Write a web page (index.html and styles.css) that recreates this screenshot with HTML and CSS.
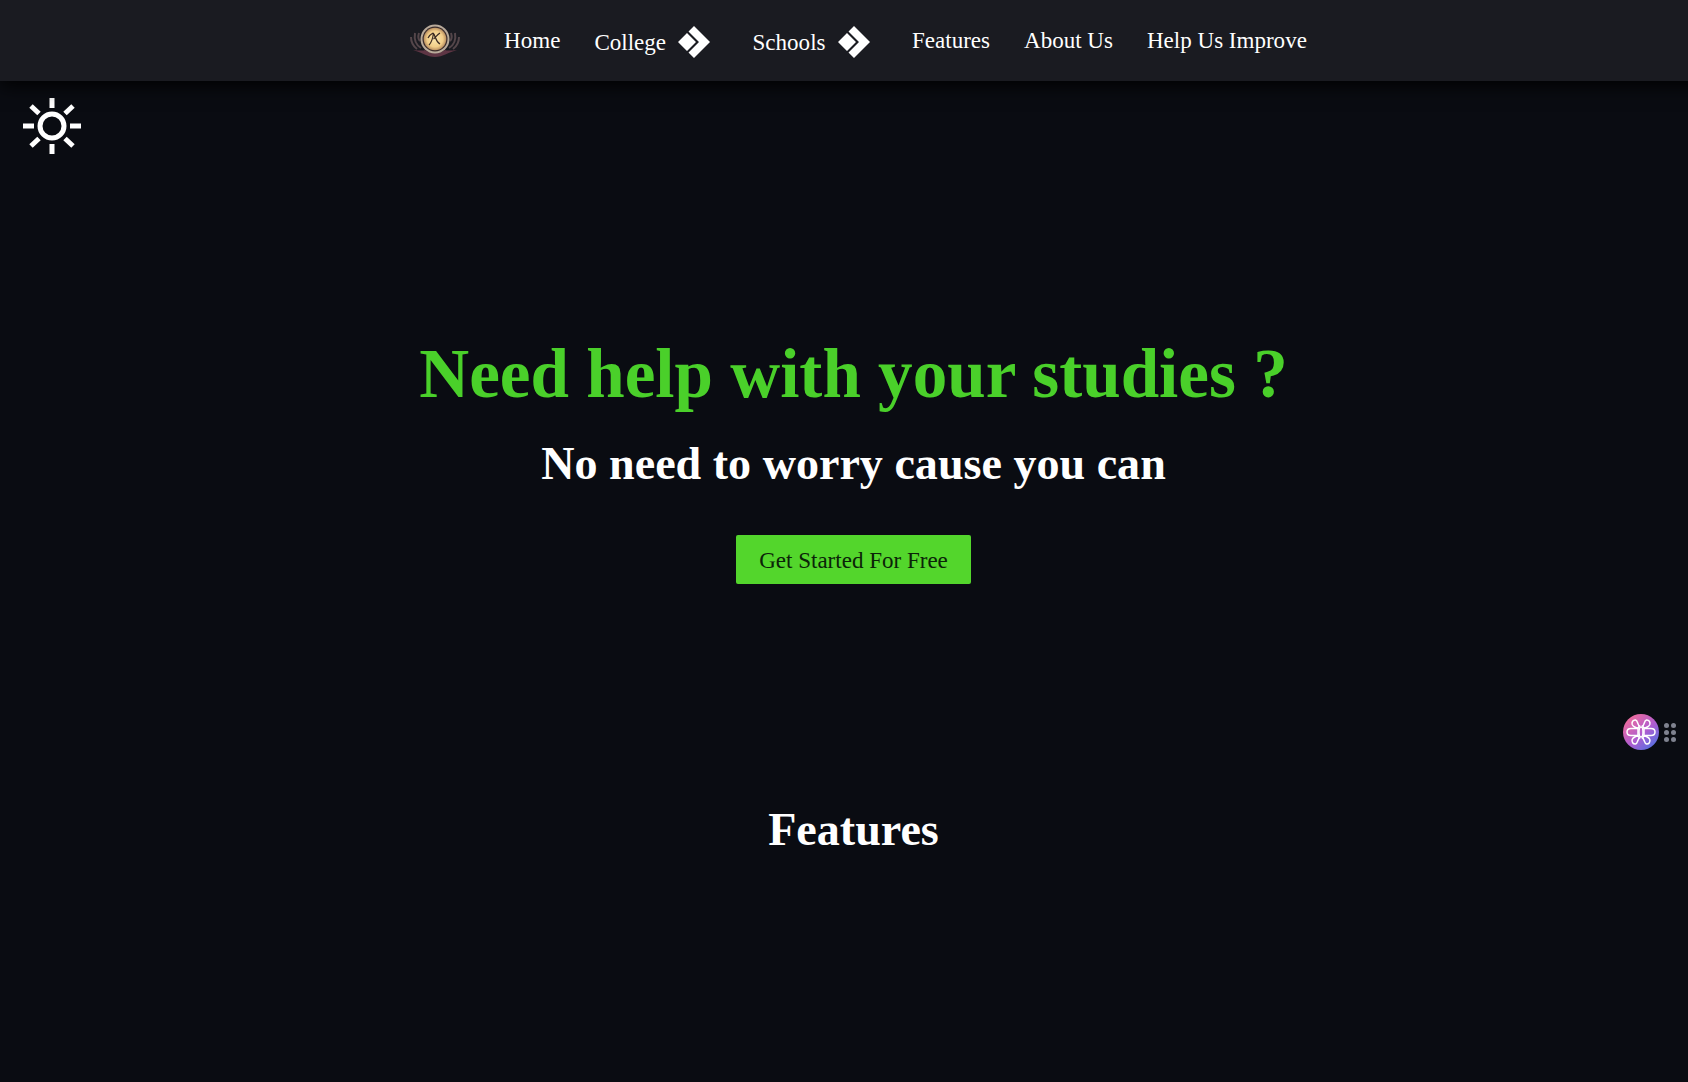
FILE: index.html
```html
<!DOCTYPE html>
<html lang="en">
<head>
<meta charset="utf-8">
<title>Need help with your studies?</title>
<link rel="stylesheet" href="styles.css">
</head>
<body>
<div class="page">
<header class="navbar">
  <nav class="nav-inner">
    <a class="logo" href="#" aria-label="Home">
      <svg viewBox="0 0 52 36" width="52" height="36">
        <defs>
          <radialGradient id="lg" cx="50%" cy="50%" r="50%">
            <stop offset="0" stop-color="#fbe6ae"/>
            <stop offset="0.7" stop-color="#f1cd88"/>
            <stop offset="1" stop-color="#b98f60"/>
          </radialGradient>
        </defs>
        <g fill="none" stroke="#54464a" stroke-width="2">
          <path d="M12 25C7 22 5 16 6 10M8 26C4 23 2 19 2 14M11 18C9 16 9 13 10 10"/>
          <path d="M40 25C45 22 47 16 46 10M44 26C48 23 50 19 50 14M41 18C43 16 43 13 42 10"/>
        </g>
        <path d="M4 27C12 29 18 34 26 34S40 29 48 27C42 27.500 38 28 36 27C33 29 30 30 26 30S19 29 16 27C14 28 10 27.500 4 27Z" fill="#5e3544"/>
        <circle cx="26" cy="16" r="14.500" fill="#b9ab9b"/>
        <circle cx="26" cy="16" r="12.500" fill="#3a2c2a"/>
        <circle cx="26" cy="16" r="11.300" fill="url(#lg)"/>
        <path d="M20 22C22 20 24 14 24.500 10M24 10C27 13 26 18 31 21M31 10C28 12 26 15 24.500 16M19 15C20 13 22 11 24 10" fill="none" stroke="#3a2a22" stroke-width="1.2"/>
      </svg>
    </a>
    <a class="nav-link" href="#">Home</a>
    <a class="nav-link nav-drop" href="#">College
      <svg class="drop-icon" viewBox="0 0 32 32" width="32" height="32"><path d="M16 0L32 16L16 32L10.500 26.500L21 16L10.500 5.500ZM9 7L18 16L9 25L0 16Z" fill="#fff"/></svg>
    </a>
    <a class="nav-link nav-drop" href="#">Schools
      <svg class="drop-icon" viewBox="0 0 32 32" width="32" height="32"><path d="M16 0L32 16L16 32L10.500 26.500L21 16L10.500 5.500ZM9 7L18 16L9 25L0 16Z" fill="#fff"/></svg>
    </a>
    <a class="nav-link" href="#">Features</a>
    <a class="nav-link" href="#">About Us</a>
    <a class="nav-link" href="#">Help Us Improve</a>
  </nav>
</header>

<div class="theme-row">
  <button class="theme-toggle" aria-label="Toggle theme">
    <svg viewBox="0 0 58 58" width="58" height="58" fill="none" stroke="#fff">
      <circle cx="29" cy="29" r="12" stroke-width="5"/>
      <g stroke-width="5">
        <path d="M29 1V11M29 47V57M0 29H11M47 29H58"/>
        <path d="M8 9L16 16.500M42 41.500L50 49M50 9L42 16.500M16 41.500L8 49"/>
      </g>
    </svg>
  </button>
</div>

<main>
  <section class="hero">
    <h1 class="hero-title">Need help with your studies ?</h1>
    <h2 class="hero-sub">No need to worry cause you can</h2>
    <a class="cta" href="#">Get Started For Free</a>
  </section>
  <section class="features">
    <h2 class="features-title">Features</h2>
  </section>
</main>
</div>

<aside class="widget">
  <span class="widget-badge">
    <svg viewBox="0 0 36 36" width="36" height="36">
      <defs>
        <linearGradient id="wg" x1="0.15" y1="0.1" x2="0.85" y2="0.9">
          <stop offset="0" stop-color="#ee6c9c"/>
          <stop offset="0.55" stop-color="#b05cd0"/>
          <stop offset="1" stop-color="#5a6fe0"/>
        </linearGradient>
      </defs>
      <circle cx="18" cy="18" r="18" fill="url(#wg)"/>
      <g fill="none" stroke="#fff" stroke-width="1.5">
        <ellipse cx="18" cy="18" rx="2" ry="5"/>
        <path d="M16.500 12C14.500 11 15 6.500 12.500 6C10 5.800 8.500 8 9.200 10.500C10 12.500 13 14 15 14Z"/>
        <path d="M19.500 12C21.500 11 21 6.500 23.500 6C26 5.800 27.500 8 26.800 10.500C26 12.500 23 14 21 14Z"/>
        <path d="M16.500 24C14.500 25 15 29.500 12.500 30C10 30.200 8.500 28 9.200 25.500C10 23.500 13 22 15 22Z"/>
        <path d="M19.500 24C21.500 25 21 29.500 23.500 30C26 30.200 27.500 28 26.800 25.500C26 23.500 23 22 21 22Z"/>
        <path d="M15 14.500H8C5.500 14.500 4 16 4 18S5.500 21.500 8 21.500H15Z"/>
        <path d="M21 14.500H28C30.500 14.500 32 16 32 18S30.500 21.500 28 21.500H21Z"/>
      </g>
    </svg>
  </span>
  <span class="grip">
    <i></i><i></i><i></i><i></i><i></i><i></i>
  </span>
</aside>
</body>
</html>
```
FILE: styles.css
```css
* { box-sizing: border-box; }
html, body { margin: 0; height: 100%; }
body {
  background: #0a0c12;
  color: #fff;
  font-family: "Liberation Serif", "Times New Roman", serif;
  overflow: hidden;
}
a { color: inherit; text-decoration: none; }

.page { width: 1707px; }

.navbar {
  height: 81px;
  background: #1a1b21;
  box-shadow: 0 4px 18px #000;
  position: relative;
}
.nav-inner {
  height: 100%;
  display: flex;
  justify-content: center;
  align-items: center;
  gap: 34px;
  font-size: 23.04px;
  padding-left: 9px;
}
.logo { display: flex; margin-right: 9px; }
.nav-drop {
  display: flex;
  align-items: center;
  gap: 12px;
  padding-top: 4px;
  margin-right: 8.5px;
}
.drop-icon { margin-top: -1px; }

.theme-row { padding: 16px 0 0 23px; height: 89px; }
.theme-toggle {
  display: block;
  padding: 0;
  background: none;
  border: 0;
}

.hero {
  display: flex;
  flex-direction: column;
  align-items: center;
  padding-top: 164px;
}
.hero-title {
  margin: 0;
  font-size: 69.12px;
  line-height: 80px;
  color: #4ad02a;
}
.hero-sub {
  margin: 23px 0 0;
  font-size: 46.08px;
  line-height: 53px;
}
.cta {
  margin-top: 45px;
  width: 235px;
  height: 49px;
  padding-top: 2px;
  display: flex;
  align-items: center;
  justify-content: center;
  background: #53d62c;
  color: #0b2408;
  font-size: 23.04px;
  border-radius: 2px;
}

.features { padding-top: 219px; text-align: center; }
.features-title {
  margin: 0;
  font-size: 46.08px;
  line-height: 53px;
}

.widget {
  position: fixed;
  top: 714px;
  right: 12px;
  display: flex;
  align-items: center;
  gap: 5px;
}
.widget-badge { display: flex; }
.grip {
  display: grid;
  grid-template-columns: 5px 5px;
  gap: 2px 2px;
}
.grip i {
  width: 5px;
  height: 5px;
  border-radius: 50%;
  background: #7f828f;
}
```
